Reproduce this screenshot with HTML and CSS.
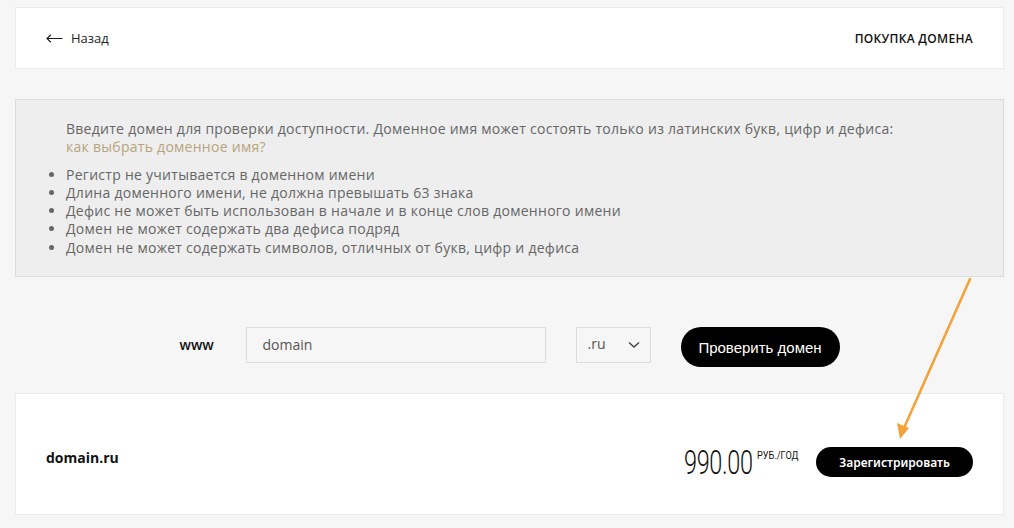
FILE: index.html
```html
<!DOCTYPE html>
<html lang="ru">
<head>
<meta charset="utf-8">
<link rel="stylesheet" href="styles.css">
</head>
<body>
<div class="page">
  <header class="topbar">
    <a class="back" href="#"><svg class="back-arrow" width="17" height="9" viewBox="0 0 17 9"><path d="M1 4.5 H16.5 M4.8 0.8 L1 4.5 L4.8 8.2" fill="none" stroke="#222" stroke-width="1.2"/></svg>Назад</a>
    <div class="title">ПОКУПКА ДОМЕНА</div>
  </header>

  <section class="info">
    <p class="lead">Введите домен для проверки доступности. Доменное имя может состоять только из латинских букв, цифр и дефиса:<br><a class="link" href="#">как выбрать доменное имя?</a></p>
    <ul class="rules">
      <li>Регистр не учитывается в доменном имени</li>
      <li>Длина доменного имени, не должна превышать 63 знака</li>
      <li>Дефис не может быть использован в начале и в конце слов доменного имени</li>
      <li>Домен не может содержать два дефиса подряд</li>
      <li>Домен не может содержать символов, отличных от букв, цифр и дефиса</li>
    </ul>
  </section>

  <div class="form">
    <span class="www">www</span>
    <div class="input">domain</div>
    <div class="select"><span>.ru</span>
      <svg width="12" height="8" viewBox="0 0 12 8"><path d="M1 1.5 L6 6 L11 1.5" fill="none" stroke="#444" stroke-width="1.4"/></svg>
    </div>
    <button class="btn-check">Проверить домен</button>
  </div>

  <section class="result">
    <div class="dname">domain.ru</div>
    <div class="buy">
      <div class="price"><span class="amount">990.00</span><span class="unit">РУБ./ГОД</span></div>
      <button class="btn-reg">Зарегистрировать</button>
    </div>
  </section>

  <svg class="pointer" width="1014" height="528" viewBox="0 0 1014 528">
    <line x1="970" y1="279" x2="904" y2="428" stroke="#f3a33a" stroke-width="2.6" stroke-linecap="round"/>
    <polygon points="900,439 897,423 909,428" fill="#f3a33a"/>
  </svg>
</div>
</body>
</html>
```

FILE: styles.css
```css
* { box-sizing: border-box; }
html, body { margin: 0; padding: 0; }
body {
  background: #f6f6f6;
  font-family: "Open Sans", "Noto Sans", sans-serif;
  color: #222;
  width: 1014px;
  height: 528px;
  overflow: hidden;
}
.page {
  position: relative;
  padding: 7px 10px 0 15px;
}
.topbar {
  height: 62px;
  background: #fff;
  border: 1px solid #ebebeb;
  display: flex;
  align-items: center;
  justify-content: space-between;
  padding: 0 30px 0 30px;
}
.back {
  display: flex;
  align-items: center;
  color: #222;
  text-decoration: none;
  font-size: 13px;
}
.back-arrow {
  margin-right: 8px;
  position: relative;
  top: 0;
}
.title {
  font-size: 12px;
  font-weight: 600;
  letter-spacing: 0.3px;
  color: #111;
}
.info {
  margin-top: 30px;
  height: 178px;
  background: #eeeeee;
  border: 1px solid #dcdcdc;
  padding: 20px 30px 0 34px;
  color: #666;
  font-size: 14px;
  letter-spacing: 0.27px;
  line-height: 18.3px;
}
.lead {
  margin: 0 0 9px 16px;
}
.link {
  color: #b8a47c;
  text-decoration: none;
}
.rules {
  margin: 0;
  padding-left: 16px;
}
.form {
  display: flex;
  align-items: flex-start;
  justify-content: center;
  margin-top: 50px;
  margin-left: 0;
}
.www {
  font-size: 14px;
  font-weight: 600;
  color: #111;
  width: 66px;
  line-height: 35px;
  font-family: "Open Sans", sans-serif;
}
.input {
  width: 300px;
  height: 36px;
  border: 1px solid #dcdcdc;
  background: #f6f6f6;
  padding-left: 16px;
  line-height: 34px;
  font-size: 14px;
  color: #555;
}
.select {
  width: 75px;
  height: 36px;
  margin-left: 30px;
  border: 1px solid #dcdcdc;
  display: flex;
  align-items: center;
  justify-content: space-between;
  padding: 0 10px 0 11px;
  font-size: 14px;
  color: #555;
}
.select span { position: relative; top: -2px; }
.btn-check {
  margin-left: 30px;
  width: 159px;
  height: 40px;
  border: none;
  border-radius: 20px;
  background: #000;
  color: #fff;
  font-family: "Liberation Sans", Arial, sans-serif;
  font-size: 15px;
  cursor: pointer;
}
.result {
  margin-top: 26px;
  height: 122px;
  background: #fff;
  border: 1px solid #ebebeb;
  display: flex;
  align-items: center;
  justify-content: space-between;
  padding: 16px 30px 0 30px;
}
.dname {
  font-size: 14px;
  font-weight: 700;
  color: #111;
  margin-top: -10px;
}
.buy {
  display: flex;
  align-items: center;
}
.price {
  display: flex;
  align-items: flex-start;
  margin-right: 17px;
}
.amount {
  display: inline-block;
  font-family: "Roboto", sans-serif;
  font-weight: 300;
  font-size: 34px;
  line-height: 34px;
  color: #111;
  transform: scaleX(0.69);
  transform-origin: left center;
  width: 70px;
  margin-right: 3px;
  letter-spacing: -0.5px;
  white-space: nowrap;
}
.unit {
  display: inline-block;
  font-family: "Roboto", sans-serif;
  font-size: 11.5px;
  color: #111;
  transform: scaleX(0.8);
  transform-origin: left center;
  width: 42px;
  margin-top: 3px;
  white-space: nowrap;
}
.btn-reg {
  width: 157px;
  height: 30px;
  border: none;
  border-radius: 15px;
  background: #000;
  color: #fff;
  font-family: "Noto Sans", "Open Sans", sans-serif;
  font-weight: 600;
  font-size: 12px;
  cursor: pointer;
}
.pointer {
  position: absolute;
  left: 0;
  top: 0;
  pointer-events: none;
}
```
